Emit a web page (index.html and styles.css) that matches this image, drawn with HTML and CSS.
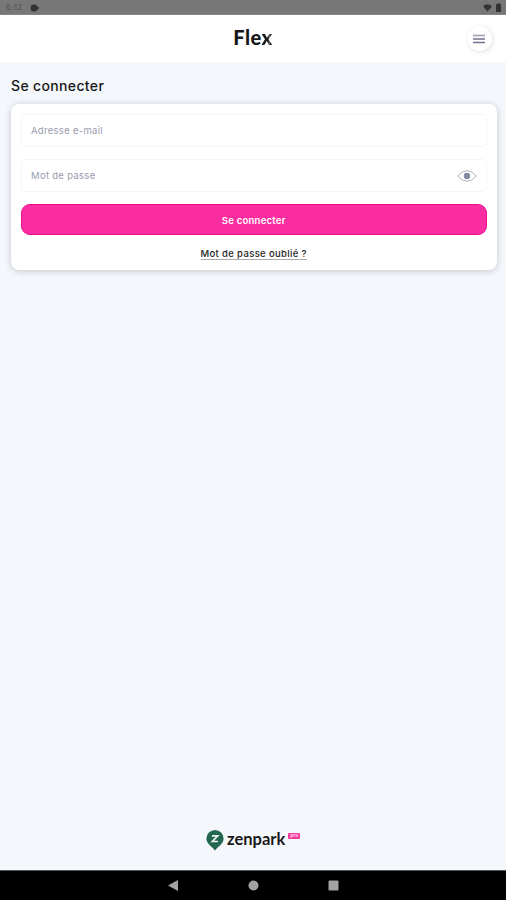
FILE: index.html
```html
<!DOCTYPE html>
<html lang="fr">
<head>
<meta charset="utf-8">
<title>Flex</title>
<link rel="stylesheet" href="styles.css">
</head>
<body>
<div class="status">
  <span class="time">6:12</span>
  <svg class="notif" width="10" height="8" viewBox="0 0 10 8"><circle cx="4" cy="4" r="3.5"/><path d="M6 1.5 9.5 4 6 6.5z"/></svg>
  <svg class="signals" width="20" height="10" viewBox="0 0 20 10"><path d="M0 3.2Q4.5-.6 9 3.2L4.500 8.500z"/><path d="M13 1.300h1V.5h3v.8h1V9h-5z"/></svg>
</div>
<header class="header">
  <span class="brand">Fle<span class="brand-x">x</span></span>
  <button class="menu" aria-label="Menu"><svg width="12" height="10" viewBox="0 0 12 10"><path d="M0 1.500h12" stroke="#aaa7b9" stroke-width="1.800"/><path d="M0 5h12M0 8.500h12" stroke="#756f90" stroke-width="1.600"/></svg></button>
</header>
<main class="main">
  <h1 class="title">Se connecter</h1>
  <form class="card">
    <div class="field"><span class="email">Adresse e-mail</span></div>
    <div class="field"><span class="password">Mot de passe</span>
      <svg width="20" height="12" viewBox="0 0 20 12"><path d="M.7 6Q5 .7 10 .7T19.300 6Q15 11.300 10 11.300T.7 6z" fill="none" stroke="#a5a8b8" stroke-width=".9"/><circle cx="10" cy="6" r="3.200" fill="#858aa2"/></svg>
    </div>
    <button type="button" class="submit"><span>Se connecter</span></button>
    <a class="forgot">Mot de passe oublié ?</a>
  </form>
</main>
<footer class="footer">
  <svg class="pin" width="18" height="21" viewBox="0 0 18 21"><path d="M9 0a8.600 8.600 0 0 1 8.600 8.600c0 4.700-4.600 7.400-8.600 12-4-4.600-8.600-7.300-8.600-12A8.600 8.600 0 0 1 9 0z" fill="#23664f"/><path d="M6 5.800h5.700L6.400 11.500H12" fill="none" stroke="#e8f2ee" stroke-width="1.700"/></svg>
  <span class="zen">zenpark</span>
  <span class="tag">pro</span>
</footer>
<nav class="nav">
  <svg width="506" height="29" viewBox="0 0 506 29"><g fill="#a2a2a2"><path d="M168 14.500 178 9v11z"/><circle cx="253.500" cy="14.500" r="5"/><rect x="328.500" y="9.500" width="10" height="10" rx="1"/></g></svg>
</nav>
</body>
</html>
```
FILE: styles.css
```css
* { box-sizing: border-box; }
body { margin: 0; width: 506px; height: 900px; display: flex; flex-direction: column; background: #f4f7fb; font-family: Inter, sans-serif; overflow: hidden; }
button { border: 0; padding: 0; font-family: inherit; }
.status { height: 15px; flex: none; display: flex; align-items: center; padding: 1px 3px 0 6px; background: #777; border-bottom: 1px solid #858585; color: #4e4e4e; fill: #333; }
.time { width: 24px; font-size: 7px; letter-spacing: .8px; }
.signals { margin-left: auto; }
.header { height: 47px; flex: none; display: grid; grid-template-columns: 1fr auto 1fr; align-items: center; background: #fff; }
.brand { grid-column: 2; margin-top: -3px; font: 900 20px/24px Lato, sans-serif; letter-spacing: .5px; color: #171717; }
.brand-x { background: linear-gradient(90deg, #171717 58%, #999 62%, #222 76%); background-clip: text; color: transparent; }
.menu { justify-self: end; width: 25px; height: 25px; margin-right: 14.5px; display: grid; place-items: center; border-radius: 50%; background: #fff; box-shadow: 1px 1px 5px #0002; }
.main { flex: 1; padding: 14px 9.500px 0 10.500px; }
.title { margin: 0 0 8px .5px; font-size: 14px; line-height: 20px; font-weight: 500; letter-spacing: .35px; color: #171717; }
.card { height: 166px; padding: 10px 10px 0 10.500px; display: flex; flex-direction: column; border-radius: 8px; background: #fff; box-shadow: 0 1px 7px #0003; }
.field { height: 33px; flex: none; margin-bottom: 12px; padding: 0 9px; display: flex; align-items: center; justify-content: space-between; border: 1px solid #f5f5f8; border-radius: 5px; font-size: 9.5px; letter-spacing: .3px; color: #999bad; }
.submit { height: 31px; flex: none; border: 1px solid #ef0c91; border-radius: 9px; background: #fc2ca1; color: #fff; font-size: 9.5px; font-weight: 600; letter-spacing: .25px; padding-top: 1px; }
.forgot { align-self: center; margin-top: 13px; font-size: 9.5px; line-height: 12px; font-weight: 500; letter-spacing: .35px; color: #252525; text-decoration: underline; text-decoration-color: #aaa; text-underline-offset: 2px; white-space: nowrap; }
.footer { height: 41px; flex: none; display: flex; align-items: flex-start; padding: 1px 0 0 206px; }
.zen { margin: -3px 0 0 3px; font: 700 16.5px/24px Lato, sans-serif; color: #191919; }
.tag { width: 12px; height: 6px; margin: 3px 0 0 3px; border-radius: 1px; background: #f4379f; color: #ffd0e9; font-size: 5px; line-height: 5px; font-weight: 700; text-align: center; }
.nav { height: 30px; flex: none; background: #000; border-top: 1px solid #555; }
.nav svg { display: block; }
```
